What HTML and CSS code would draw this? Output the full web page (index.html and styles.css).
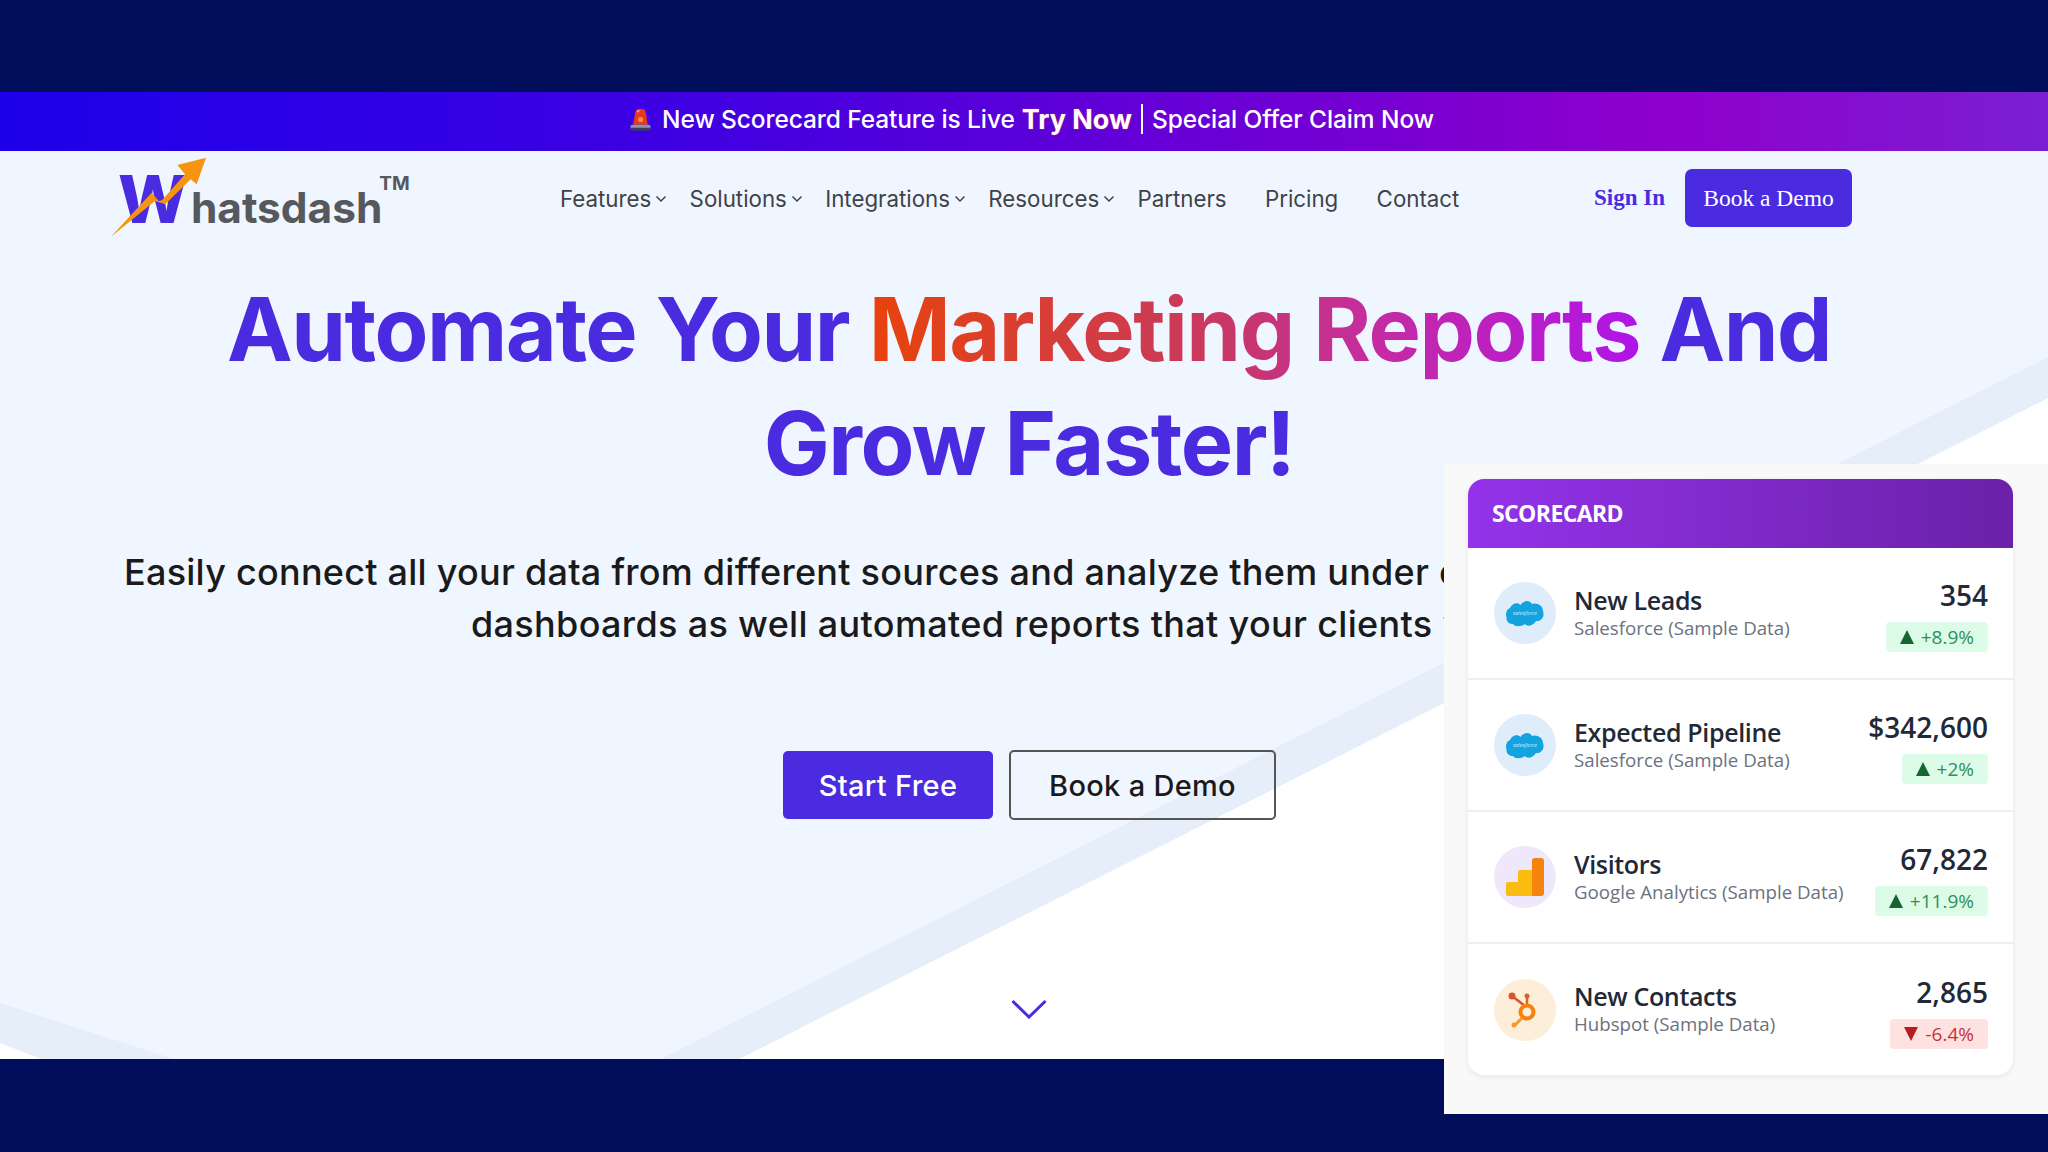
FILE: index.html
```html
<!DOCTYPE html>
<html lang="en">
<head>
<meta charset="utf-8">
<title>Whatsdash</title>
<link rel="stylesheet" href="styles.css">
</head>
<body>
<div class="frame">
  <div class="navy-top"></div>
  <div class="banner">
    <svg class="siren" viewBox="0 0 24 22" aria-hidden="true">
      <path d="M5 16 L7 4 Q7.500 1 11 1 H13 Q16.500 1 17 4 L19 16Z" fill="#e8391f"/>
      <path d="M9 4 Q9.500 2.500 11 2.500" stroke="#ff9a80" stroke-width="1.500" fill="none"/>
      <circle cx="12" cy="11" r="2.500" fill="#ff8a4a"/>
      <rect x="2.500" y="16" width="19" height="5" rx="1.500" fill="#8d93a8"/>
      <rect x="2.500" y="19" width="19" height="2.500" rx="1" fill="#3a3f55"/>
    </svg>
    <span class="banner-text">New Scorecard Feature is Live</span>
    <strong class="banner-strong">Try Now</strong>
    <span class="banner-sep"></span>
    <span class="banner-text">Special Offer Claim Now</span>
  </div>
  <div class="page">
    <svg class="backdrop" viewBox="0 0 2048 907" preserveAspectRatio="none" aria-hidden="true">
      <polygon points="0,0 2048,0 2048,247 739,907 41,907 0,891" fill="#e5eef9"/>
      <polygon points="0,0 2048,0 2048,206 661,907 174,907 0,851" fill="#f0f6ff"/>
    </svg>
    <header class="topnav">
      <a class="logo">
        <span class="logo-w">W</span><span class="logo-word">hatsdash</span><span class="logo-tm">TM</span>
        <svg class="logo-arrow" viewBox="0 0 320 95" aria-hidden="true">
          <path d="M32 258 L155 125 L176 150 L186 148 L255 70 L232 42 L318 20 L290 100 L272 85 L196 160 L165 150Z" transform="scale(.3333)" fill="#f7940f"/>
        </svg>
      </a>
      <nav class="menu">
        <a class="menu-item">Features<svg class="caret" viewBox="0 0 12 8"><path d="M1.500 1.500 L6 6 L10.500 1.500"/></svg></a>
        <a class="menu-item">Solutions<svg class="caret" viewBox="0 0 12 8"><path d="M1.500 1.500 L6 6 L10.500 1.500"/></svg></a>
        <a class="menu-item">Integrations<svg class="caret" viewBox="0 0 12 8"><path d="M1.500 1.500 L6 6 L10.500 1.500"/></svg></a>
        <a class="menu-item">Resources<svg class="caret" viewBox="0 0 12 8"><path d="M1.500 1.500 L6 6 L10.500 1.500"/></svg></a>
        <a class="menu-item plain">Partners</a>
        <a class="menu-item plain">Pricing</a>
        <a class="menu-item plain">Contact</a>
      </nav>
      <div class="actions">
        <a class="signin">Sign In</a>
        <a class="demo-small">Book a Demo</a>
      </div>
    </header>
    <main class="hero">
      <h1 class="headline">Automate Your <span class="grad">Marketing Reports</span> And<br>Grow Faster!</h1>
      <p class="lead"><span class="lead-line">Easily connect all your data from different sources and analyze them under o</span><span class="lead-line lead-second">dashboards as well automated reports that your clients w</span></p>
      <div class="cta">
        <a class="btn btn-fill">Start Free</a>
        <a class="btn btn-line">Book a Demo</a>
      </div>
      <svg class="scroll-down" viewBox="0 0 36 20" aria-hidden="true"><path d="M1.500 2 L18 18 L34.500 2"/></svg>
    </main>
  </div>
  <div class="navy-bottom"></div>

  <aside class="panel">
    <section class="card">
      <div class="card-head">SCORECARD</div>
      <div class="row">
        <div class="ico ico-blue">
          <svg class="cloud" viewBox="0 0 40 28" aria-hidden="true"><path d="M8 25 C3 25 1 21 1.500 18 C0 14 2 10 5 9 C7 4 13 3 15.500 6 C18 1 25 1 27 5 C31 3 38 6 38 12 C40 18 36 23 31 22 C28 27 22 28 20 25 C16 28 10 28 8 25Z" fill="#12a3e0"/><text class="cloud-label" x="20" y="16" text-anchor="middle">salesforce</text></svg>
        </div>
        <div class="meta"><div class="name">New Leads</div><div class="src">Salesforce (Sample Data)</div></div>
        <div class="nums"><div class="val">354</div><div class="chg up"><i class="tri"></i>+8.9%</div></div>
      </div>
      <div class="row">
        <div class="ico ico-blue">
          <svg class="cloud" viewBox="0 0 40 28" aria-hidden="true"><path d="M8 25 C3 25 1 21 1.500 18 C0 14 2 10 5 9 C7 4 13 3 15.500 6 C18 1 25 1 27 5 C31 3 38 6 38 12 C40 18 36 23 31 22 C28 27 22 28 20 25 C16 28 10 28 8 25Z" fill="#12a3e0"/><text class="cloud-label" x="20" y="16" text-anchor="middle">salesforce</text></svg>
        </div>
        <div class="meta"><div class="name">Expected Pipeline</div><div class="src">Salesforce (Sample Data)</div></div>
        <div class="nums"><div class="val">$342,600</div><div class="chg up"><i class="tri"></i>+2%</div></div>
      </div>
      <div class="row">
        <div class="ico ico-purple">
          <svg class="bars" viewBox="0 0 38 38" aria-hidden="true">
            <path d="M2 38 Q0 38 0 36 V26 Q0 24 2 24 H12 V14 Q12 12 14 12 H26 V38Z" fill="#fbbc12"/>
            <path d="M26 3 Q26 0 29 0 H35 Q38 0 38 3 V35 Q38 38 35 38 H26Z" fill="#f5840c"/>
          </svg>
        </div>
        <div class="meta"><div class="name">Visitors</div><div class="src">Google Analytics (Sample Data)</div></div>
        <div class="nums"><div class="val">67,822</div><div class="chg up"><i class="tri"></i>+11.9%</div></div>
      </div>
      <div class="row">
        <div class="ico ico-orange">
          <svg class="spot" viewBox="0 0 34 36" aria-hidden="true">
            <circle cx="4" cy="4" r="3.500" fill="#d9522a"/>
            <path d="M4 4 L17 14" stroke="#d9522a" stroke-width="2.500"/>
            <path d="M19 5 V13" stroke="#d9622a" stroke-width="2.500"/>
            <circle cx="19" cy="4" r="2.500" fill="#d9622a"/>
            <circle cx="19" cy="20" r="6.500" fill="none" stroke="#f5820d" stroke-width="4"/>
            <path d="M14 26 L7 33" stroke="#f59a2d" stroke-width="3"/>
            <circle cx="6" cy="33" r="2.500" fill="#f59a2d"/>
          </svg>
        </div>
        <div class="meta"><div class="name">New Contacts</div><div class="src">Hubspot (Sample Data)</div></div>
        <div class="nums"><div class="val">2,865</div><div class="chg down"><i class="tri"></i>-6.4%</div></div>
      </div>
    </section>
  </aside>
</div>
</body>
</html>
```

FILE: styles.css
```css
* { box-sizing: border-box; }
html, body { margin: 0; padding: 0; }
body { width: 2048px; height: 1152px; overflow: hidden; background: #000e5c; font-family: "Inter", "Liberation Sans", sans-serif; }
a { color: inherit; text-decoration: none; }

.frame { position: relative; display: flex; flex-direction: column; width: 2048px; height: 1152px; overflow: hidden; }
.navy-top { height: 92px; background: #000e5c; }
.navy-bottom { flex: 1; background: #000e5c; }

.banner {
  display: flex; align-items: center; justify-content: center;
  height: 59px; padding: 0 0 5px 14px; color: #fff;
  background: linear-gradient(90deg, #1d00ea 0%, #3d00e2 32%, #8f00cc 82%, #7a1fd4 100%);
}
.siren { width: 25px; height: 23px; margin-right: 9px; }
.banner-text { font-size: 24.5px; font-weight: 500; letter-spacing: -.1px; }
.banner-strong { font-size: 27px; font-weight: 700; margin-left: 7px; text-shadow: 0 0 2px #d0205a; }
.banner-sep { width: 2px; height: 30px; background: #fff; margin: 0 9px 0 9px; }

.page { position: relative; display: flex; flex-direction: column; height: 908px; background: #fff; color: #333; }
.backdrop { position: absolute; inset: 0; width: 100%; height: 100%; }

.topnav { position: relative; display: flex; align-items: center; height: 94px; padding: 0 196px 0 110px; }
.logo { position: relative; display: flex; align-items: baseline; width: 300px; height: 81px; margin-top: 6px; padding: 7px 0 0 8px; font-weight: 700; }
.logo-w { font-size: 66px; line-height: 62px; font-weight: 800; color: #4a2be0; }
.logo-word { font-size: 42.4px; line-height: 62px; font-weight: 650; color: #55585c; margin-left: 3px; }
.logo-tm { align-self: flex-start; font-size: 19px; line-height: 20px; color: #55585c; margin: 6px 0 0 -3px; }
.logo-arrow { position: absolute; left: -10px; top: -10px; width: 320px; height: 95px; overflow: visible; }

.menu { display: flex; align-items: center; gap: 22.3px; margin-left: 150px; color: #3f4347; font-size: 22.3px; }
.menu-item { display: flex; align-items: center; gap: 4px; }
.menu-item.plain + .menu-item.plain { margin-left: 16px; }
.caret { width: 12px; height: 8px; fill: none; stroke: #3f4347; stroke-width: 1.500; margin-top: 2px; }

.actions { display: flex; align-items: center; gap: 20px; margin-left: auto; font-family: "Liberation Serif", serif; font-size: 23px; }
.signin { color: #4a2be0; font-weight: 700; }
.demo-small { display: flex; align-items: center; justify-content: center; width: 167px; height: 58px; border-radius: 7px; background: #4a2be0; color: #fff; font-size: 23.5px; }

.hero { position: relative; display: flex; flex-direction: column; align-items: center; flex: 1; padding-left: 10px; }
.headline { margin: 27px 0 0; font-size: 88px; line-height: 114px; font-weight: 650; letter-spacing: -1.45px; color: #4a2be0; text-align: center; }
.grad { background: linear-gradient(90deg, #e8420c 0%, #c93a5a 42%, #c52ca0 65%, #b014e8 100%); -webkit-background-clip: text; background-clip: text; color: transparent; }
.lead { align-self: flex-start; margin: 46px 0 0 114px; font-size: 36px; line-height: 52px; font-weight: 500; letter-spacing: .25px; color: #1a1a1a; white-space: nowrap; }
.lead-line { display: block; }
.lead-second { padding-left: 347px; letter-spacing: .33px; }
.cta { display: flex; align-items: center; gap: 16px; margin: 100px 0 0 1px; }
.btn { display: flex; align-items: center; justify-content: center; font-size: 29px; font-weight: 500; letter-spacing: .3px; border-radius: 5px; }
.btn-fill { width: 210px; height: 68px; background: #4a2be0; color: #fff; }
.btn-line { width: 267px; height: 70px; border: 2px solid #555; color: #1a1a1a; }
.scroll-down { width: 36px; height: 20px; margin-top: 179px; fill: none; stroke: #4a2be0; stroke-width: 3; }

.panel { position: absolute; left: 1444px; top: 464px; width: 604px; height: 650px; padding: 15px 35px 0 24px; background: #f9f9f9; }
.card { display: flex; flex-direction: column; border-radius: 16px; background: #fff; box-shadow: 0 2px 6px rgba(0,0,0,.08); overflow: hidden; font-family: "Open Sans", "Liberation Sans", sans-serif; }
.card-head { display: flex; align-items: center; height: 69px; padding: 0 0 2px 24px; color: #fff; font-size: 23px; font-weight: 700; letter-spacing: -.6px; background: linear-gradient(90deg, #9333ea, #6b21a8); }
.row { display: flex; align-items: center; height: 132px; padding: 0 25px 0 26px; border-bottom: 2px solid #eceef0; }
.row:last-child { height: 131px; border-bottom: 0; }
.ico { display: flex; align-items: center; justify-content: center; flex: none; width: 62px; height: 62px; border-radius: 50%; }
.ico-blue { background: #dfedfb; }
.ico-purple { background: #efe8fb; }
.ico-orange { background: #fdeed9; }
.cloud { width: 40px; height: 28px; }
.cloud-label { font-size: 5.500px; fill: #cfeefc; font-style: italic; }
.bars { width: 38px; height: 38px; }
.spot { width: 34px; height: 36px; }
.meta { margin: -2px 0 0 18px; flex: 1; }
.name { font-size: 25px; line-height: 30px; font-weight: 600; color: #1f2937; letter-spacing: -.35px; }
.src { font-size: 18.7px; line-height: 25px; color: #6b7280; }
.nums { display: flex; flex-direction: column; align-items: flex-end; gap: 10px; margin-top: 4px; }
.val { font-size: 28px; line-height: 34px; font-weight: 600; color: #1f2937; }
.chg { display: flex; align-items: center; gap: 7px; height: 30px; padding: 0 14px; border-radius: 4px; font-size: 19px; }
.up { background: #dcfce7; color: #2f8f5b; }
.down { background: #fee2e2; color: #c9303a; }
.tri { width: 0; height: 0; border-left: 7px solid transparent; border-right: 7px solid transparent; }
.up .tri { border-bottom: 14px solid #166534; }
.down .tri { border-top: 14px solid #b91c1c; }
```
